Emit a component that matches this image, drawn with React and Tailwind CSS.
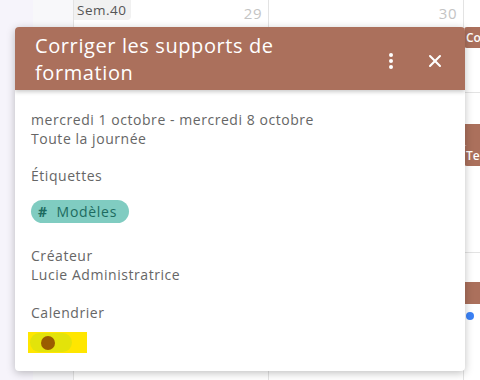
import { X } from 'lucide-react';

function DayColumn({ label }) {
  return (
    <div className="relative flex w-[195px] shrink-0 flex-col border-r border-[#e3e3e3]">
      <div className="flex h-[93px] justify-end border-b border-[#e3e3e3] pr-[6px] pt-[2px] text-[15px] tracking-[0.5px] text-[#c4c4c4]">
        {label}
      </div>
      <div className="h-[160px] border-b border-[#e3e3e3]" />
      <div className="flex-1" />
    </div>
  );
}

export default function App() {
  return (
    <div
      className="relative h-[380px] w-[480px] overflow-hidden bg-white"
      style={{ fontFamily: '"Open Sans", "Noto Sans", sans-serif' }}
    >
      {/* Calendar background */}
      <div className="flex h-full">
        <div className="w-[33px] shrink-0 bg-[#f6f4fb]" />
        <div className="w-[40px] shrink-0 bg-[#f8f8fa]" />
        <div className="relative flex border-l border-[#e3e3e3]">
          <div className="absolute left-0 top-0 z-10 flex h-[20px] items-center rounded-br bg-[#f1f1f1] pl-[3px] pr-[5px] text-[13.5px] tracking-[0.5px] text-[#555]">
            Sem.40
          </div>
          <DayColumn label="29" />
          <DayColumn label="30" />
          <div className="flex w-[20px] shrink-0 flex-col">
            <div className="h-[27px]" />
            <div className="flex h-[21px] items-center overflow-hidden rounded-l-[3px] bg-[#ab705c] pl-[2px] text-[12px] font-semibold text-white">
              Co
            </div>
            <div className="h-[45px] border-b border-[#e3e3e3]" />
            <div className="h-[31px]" />
            <div className="h-[21px] bg-[#ab705c]" />
            <div className="flex h-[21px] items-center overflow-hidden rounded-l-[3px] bg-[#ab705c] pl-[2px] text-[12px] font-semibold text-white">
              Te
            </div>
            <div className="h-[87px] border-b border-[#e3e3e3]" />
            <div className="h-[29px]" />
            <div className="h-[22px] bg-[#ab705c]" />
            <div className="flex h-[24px] items-center pl-[2px]">
              <span className="h-[8px] w-[8px] rounded-full bg-[#3b82f6]" />
            </div>
          </div>
        </div>
      </div>

      {/* Event popup */}
      <div className="absolute left-[15px] top-[27px] flex h-[344px] w-[450px] flex-col overflow-hidden rounded-[4px] bg-white shadow-[0_2px_8px_rgba(0,0,0,0.25)]">
        <div className="flex h-[63px] shrink-0 items-start bg-[#ab705c] pl-[20px] pr-[20px] pt-[5px] shadow-[0_2px_4px_rgba(0,0,0,0.2)]">
          <h2 className="w-[300px] text-[20px] leading-[27px] tracking-[0.6px] text-white">
            Corriger les supports de formation
          </h2>
          <div className="ml-auto flex items-center gap-[31px] pt-[19px] text-white">
            <svg width="6" height="18" viewBox="0 0 6 18" fill="white">
              <circle cx="3" cy="3" r="2" />
              <circle cx="3" cy="9" r="2" />
              <circle cx="3" cy="15" r="2" />
            </svg>
            <X className="h-[20px] w-[20px]" strokeWidth={2.5} />
          </div>
        </div>
        <div className="flex flex-col pl-[16px] pt-[20px] text-[14px] leading-[19px] tracking-[0.55px] text-[#666]">
          <p>mercredi 1 octobre - mercredi 8 octobre</p>
          <p>Toute la journée</p>
          <p className="mt-[18px]">Étiquettes</p>
          <div className="mt-[15px] flex">
            <span className="flex h-[23px] items-center gap-[9px] rounded-full bg-[#80ccc1] pl-[7px] pr-[12px] text-[#1d6b60]">
              <span className="font-bold">#</span>
              <span className="text-[14px] tracking-[0.7px]">Modèles</span>
            </span>
          </div>
          <p className="mt-[23px]">Créateur</p>
          <p>Lucie Administratrice</p>
          <p className="mt-[19px]">Calendrier</p>
          <div className="-ml-[3px] mt-[10px] flex h-[21px] w-[59px] items-center bg-[#ffe600] pl-[2px]">
            <div className="flex h-[19px] w-[42px] items-center rounded-full bg-[#e3e30a] pl-[11px]">
              <span className="h-[14px] w-[14px] rounded-full bg-[#9a5c00]" />
            </div>
          </div>
        </div>
      </div>
    </div>
  );
}
